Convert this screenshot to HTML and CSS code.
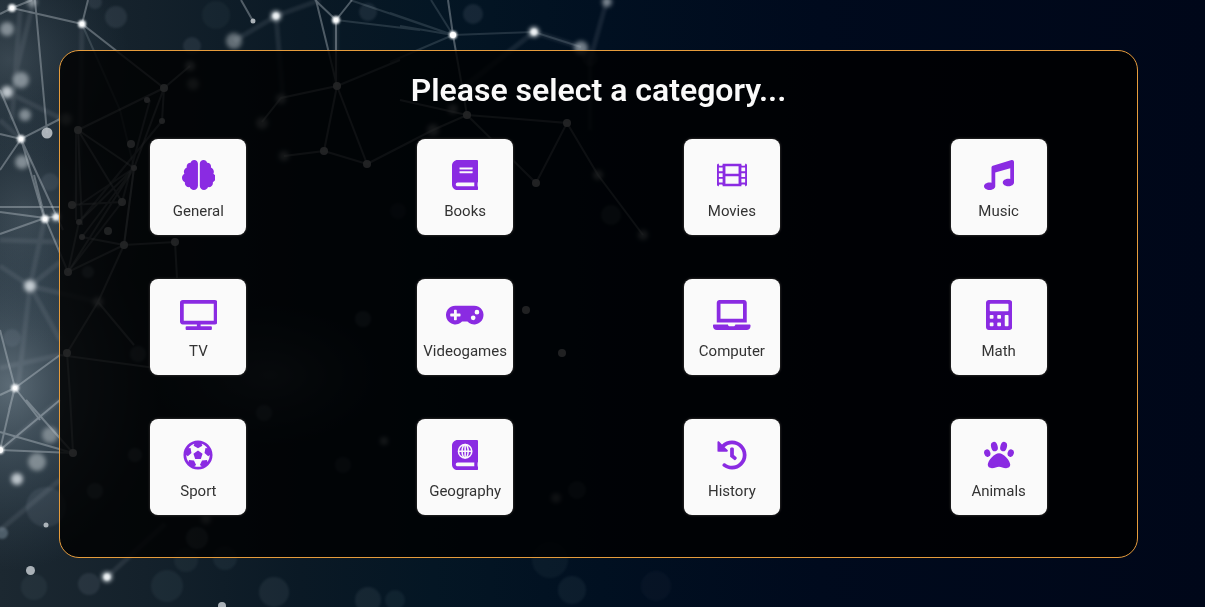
FILE: index.html
```html
<!DOCTYPE html>
<html lang="en">
<head>
<meta charset="utf-8">
<title>Select a category</title>
<link rel="stylesheet" href="styles.css">
</head>
<body>
<svg class="backdrop" viewBox="0 0 1205 607" preserveAspectRatio="xMinYMin slice" aria-hidden="true">
  <defs>
    <linearGradient id="night" x1="0" y1="0" x2="1" y2="0">
      <stop offset="0" stop-color="#1c2831"/>
      <stop offset=".12" stop-color="#14212b"/>
      <stop offset=".25" stop-color="#0a1925"/>
      <stop offset=".36" stop-color="#041624"/>
      <stop offset=".5" stop-color="#011021"/>
      <stop offset=".68" stop-color="#000a1d"/>
      <stop offset="1" stop-color="#000719"/>
    </linearGradient>
    <radialGradient id="haze">
      <stop offset="0" stop-color="#8798a4" stop-opacity=".6"/>
      <stop offset=".5" stop-color="#617482" stop-opacity=".32"/>
      <stop offset="1" stop-color="#4a5e6c" stop-opacity="0"/>
    </radialGradient>
    <filter id="soft0" x="-10%" y="-10%" width="120%" height="120%"><feGaussianBlur stdDeviation=".5"/></filter>
    <filter id="soft1" x="-50%" y="-50%" width="200%" height="200%"><feGaussianBlur stdDeviation="1"/></filter>
    <filter id="soft2" x="-50%" y="-50%" width="200%" height="200%"><feGaussianBlur stdDeviation="2"/></filter>
  </defs>
  <rect width="1205" height="607" fill="url(#night)"/>
  <ellipse cx="10" cy="385" rx="150" ry="185" fill="url(#haze)"/>
  <ellipse cx="25" cy="215" rx="120" ry="130" fill="url(#haze)" opacity=".5"/>
  <ellipse cx="10" cy="60" rx="120" ry="110" fill="url(#haze)" opacity=".45"/>
  <ellipse cx="270" cy="375" rx="120" ry="70" fill="url(#haze)" opacity=".4"/>

  <g fill="#8fa3b1" fill-opacity=".13" filter="url(#soft1)">
    <circle cx="116" cy="17" r="11"/><circle cx="216" cy="15" r="14" fill-opacity=".06"/>
    <circle cx="192" cy="46" r="9"/><circle cx="368" cy="12" r="9"/><circle cx="473" cy="14" r="10"/>
    <circle cx="95" cy="2" r="7"/><circle cx="50" cy="182" r="9"/><circle cx="12" cy="338" r="9"/>
    <circle cx="46" cy="507" r="20"/><circle cx="2" cy="533" r="6" fill-opacity=".4"/>
    <circle cx="34" cy="587" r="13" fill-opacity=".08"/><circle cx="89" cy="584" r="11"/>
    <circle cx="167" cy="586" r="16" fill-opacity=".08"/><circle cx="225" cy="558" r="12" fill-opacity=".08"/>
    <circle cx="274" cy="592" r="15" fill-opacity=".1"/><circle cx="368" cy="600" r="13" fill-opacity=".1"/><circle cx="395" cy="600" r="10" fill-opacity=".08"/>
    <circle cx="186" cy="560" r="12" fill-opacity=".07"/><circle cx="550" cy="560" r="18" fill-opacity=".06"/>
    <circle cx="572" cy="590" r="14" fill-opacity=".08"/><circle cx="656" cy="586" r="15" fill-opacity=".04"/>
    <circle cx="197" cy="538" r="11" fill-opacity=".3"/><circle cx="135" cy="455" r="7" fill-opacity=".3"/>
    <circle cx="95" cy="491" r="8" fill-opacity=".3"/><circle cx="363" cy="319" r="8" fill-opacity=".3"/>
    <circle cx="264" cy="413" r="8" fill-opacity=".25"/><circle cx="343" cy="465" r="8" fill-opacity=".2"/>
    <circle cx="590" cy="58" r="8"/><circle cx="611" cy="215" r="10" fill-opacity=".25"/>
    <circle cx="398" cy="211" r="8"/><circle cx="577" cy="490" r="9" fill-opacity=".2"/>
    <circle cx="138" cy="354" r="8" fill-opacity=".3"/><circle cx="88" cy="272" r="6" fill-opacity=".4"/>
  </g>

  <g fill="none" stroke="#b6c3cc" stroke-opacity=".1" stroke-width="5" filter="url(#soft1)">
    <path d="M20 10L12 120M7 92L60 118M30 286L0 266M30 286L18 388M30 286L60 340M30 286L60 262M0 450L60 400M98 302L30 286M45 218L30 286M0 240L60 242M0 368L60 355M82 24L80 130L76 205M336 20V86M234 41L276 16L320 0M107 577L165 524M534 32L581 47M607 0L590 60V130M534 32L460 90M276 16L283 98M22 140L0 120M34 0L14 80M60 480L0 530"/>
  </g>
  <g fill="none" stroke="#d2dce3" stroke-opacity=".34" stroke-width="2" filter="url(#soft0)">
    <path d="M0 14L12 8L32 0M12 8L82 24L164 88M35 0L47 133M82 24L88 0M241 0L253 21M315 0L336 20L352 0M316 0L337 86M336 20V86M448 0L453 35L467 115M21 139L0 90M21 139L0 170M21 139L44 218M21 139L63 230M0 134L21 139L60 119"/>
    <path d="M82 24L120 110L134 168M336 20L420 30M350 0L453 35L390 13M453 35L400 26M453 35L390 62M431 0L453 35L534 32L581 47" stroke-opacity=".15"/>
    <path d="M0 212L45 218L0 234M45 218L34 175M45 218L68 272M45 218L60 216M0 207H60M15 388L0 330M15 388L0 395M15 388L60 355L170 370M15 388L9 410M15 388L40 420M0 450L14 390M0 450L73 453M0 450L60 400M73 453L26 400M0 432L73 453"/>
    <path d="M73 453L70 395L67 353L98 302L124 245M164 88L78 130L134 168L164 88L190 66M164 88L162 121M78 130L82 225M78 130L122 202M134 168L79 222L68 272L134 168M134 168L82 237L124 245M134 168L124 245L175 242L177 278M124 245L68 272M122 202L70 205M124 245L98 302L134 345M337 86L281 98L262 122M337 86L324 151L284 156M337 86L367 164L324 151M367 164L433 130L467 115L567 123L536 183L467 115M567 123L598 175L643 235M467 115L400 100"/>
    <path d="M79 222L162 121M79 205L134 168M122 202L150 100M124 245L134 168M76 130L76 220M68 272L122 202M337 86L400 60" stroke-opacity=".3"/>
  </g>

  <g fill="#cbd3d8" fill-opacity=".55" filter="url(#soft2)">
    <circle cx="7" cy="29" r="7"/><circle cx="32" cy="2" r="5"/><circle cx="21" cy="80" r="8"/>
    <circle cx="25" cy="115" r="6"/><circle cx="22" cy="162" r="7"/><circle cx="7" cy="92" r="6" fill-opacity=".9"/>
    <circle cx="234" cy="41" r="8" fill-opacity=".45"/><circle cx="50" cy="435" r="8" fill-opacity=".45"/>
    <circle cx="37" cy="462" r="9" fill-opacity=".5"/><circle cx="17" cy="479" r="6" fill-opacity=".9"/>
    <circle cx="30" cy="286" r="6" fill-opacity=".95"/><circle cx="276" cy="16" r="5" fill-opacity="1"/>
    <circle cx="534" cy="32" r="5" fill-opacity="1"/><circle cx="581" cy="48" r="7"/>
    <circle cx="607" cy="2" r="5"/><circle cx="107" cy="577" r="5" fill-opacity="1"/>
    <circle cx="190" cy="66" r="5"/><circle cx="193" cy="84" r="6" fill-opacity=".4"/><circle cx="281" cy="99" r="5"/>
    <circle cx="262" cy="123" r="6" fill-opacity=".5"/><circle cx="284" cy="156" r="5"/><circle cx="98" cy="302" r="5"/>
    <circle cx="433" cy="130" r="6"/><circle cx="453" cy="109" r="5"/><circle cx="598" cy="175" r="5"/>
    <circle cx="643" cy="235" r="5"/><circle cx="384" cy="441" r="4"/><circle cx="556" cy="498" r="5" fill-opacity=".4"/>
    <circle cx="66" cy="119" r="6" fill-opacity=".4"/><circle cx="56" cy="217" r="4" fill-opacity="1"/>
    <circle cx="206" cy="519" r="5" fill-opacity=".4"/>
  </g>
  <g fill="#eef2f4" filter="url(#soft1)">
    <circle cx="12" cy="8" r="4"/><circle cx="82" cy="24" r="4"/><circle cx="21" cy="139" r="4"/>
    <circle cx="336" cy="20" r="4"/><circle cx="453" cy="35" r="4"/><circle cx="45" cy="219" r="4"/>
    <circle cx="56" cy="217" r="3"/><circle cx="15" cy="388" r="4"/><circle cx="0" cy="450" r="4"/>
    <circle cx="276" cy="16" r="3"/><circle cx="534" cy="32" r="3"/><circle cx="107" cy="577" r="3"/>
  </g>
  <g fill="#fff">
    <circle cx="12" cy="8" r="2"/><circle cx="82" cy="24" r="2"/><circle cx="21" cy="139" r="2"/>
    <circle cx="336" cy="20" r="2"/><circle cx="453" cy="35" r="3"/><circle cx="45" cy="219" r="2"/>
    <circle cx="15" cy="388" r="2"/><circle cx="0" cy="450" r="3"/>
  </g>
  <g fill="#bac1c6" fill-opacity=".9">
    <circle cx="47" cy="133" r="5.5"/><circle cx="253" cy="21" r="2.5"/><circle cx="46" cy="525" r="2.5"/>
    <circle cx="30.500" cy="570.500" r="4.500"/><circle cx="222" cy="606" r="4"/>
  </g>
  <g fill="#c3cacf" fill-opacity=".9" filter="url(#soft0)">
    <circle cx="164" cy="88" r="4"/><circle cx="147" cy="100" r="3"/><circle cx="162" cy="121" r="3"/>
    <circle cx="78" cy="130" r="4"/><circle cx="131" cy="144" r="4"/><circle cx="134" cy="168" r="3"/>
    <circle cx="122" cy="202" r="4"/><circle cx="72" cy="205" r="4"/><circle cx="79" cy="222" r="3"/>
    <circle cx="82" cy="237" r="3"/><circle cx="108" cy="231" r="4"/><circle cx="124" cy="245" r="4"/>
    <circle cx="175" cy="242" r="4"/><circle cx="68" cy="272" r="4"/><circle cx="337" cy="86" r="4"/>
    <circle cx="324" cy="151" r="4"/><circle cx="367" cy="164" r="4"/><circle cx="467" cy="115" r="4"/>
    <circle cx="567" cy="123" r="4"/><circle cx="536" cy="183" r="4"/><circle cx="67" cy="353" r="4"/>
    <circle cx="73" cy="453" r="4"/><circle cx="562" cy="353" r="4"/><circle cx="526" cy="310" r="4"/>
  </g>
</svg>

<main class="panel">
  <h1 class="title">Please select a category...</h1>
  <div class="categories">
    <button class="card" type="button">
      <svg class="icon" viewBox="0 0 576 512" aria-hidden="true"><path d="M208 0c-29.900 0-54.700 20.500-61.800 48.200-.8 0-1.400-.2-2.200-.2-35.300 0-64 28.700-64 64 0 4.800.6 9.500 1.700 14C52.500 138 32 166.600 32 200c0 12.600 3.200 24.300 8.300 34.900C16.300 248.700 0 274.300 0 304c0 33.300 20.400 61.900 49.400 73.900-.9 4.600-1.400 9.300-1.400 14.100 0 39.800 32.200 72 72 72 4.100 0 8.100-.5 12-1.200 9.600 28.500 36.200 49.200 68 49.200 39.800 0 72-32.200 72-72V64c0-35.300-28.700-64-64-64zm368 304c0-29.700-16.300-55.300-40.300-69.100 5.200-10.600 8.300-22.300 8.300-34.900 0-33.400-20.500-62-49.700-74 1-4.500 1.700-9.200 1.700-14 0-35.300-28.700-64-64-64-.8 0-1.500.2-2.200.2C422.700 20.500 397.900 0 368 0c-35.300 0-64 28.600-64 64v376c0 39.800 32.200 72 72 72 31.800 0 58.400-20.700 68-49.200 3.900.7 7.900 1.200 12 1.200 39.800 0 72-32.200 72-72 0-4.800-.5-9.500-1.400-14.100 29-12 49.400-40.600 49.400-73.900z"/></svg>
      <span class="label">General</span>
    </button>
    <button class="card" type="button">
      <svg class="icon" viewBox="0 0 448 512" aria-hidden="true"><path d="M448 360V24c0-13.300-10.700-24-24-24H96C43 0 0 43 0 96v320c0 53 43 96 96 96h328c13.300 0 24-10.700 24-24v-16c0-7.500-3.500-14.300-8.900-18.700-4.200-15.400-4.200-59.300 0-74.700 5.400-4.300 8.900-11.100 8.900-18.600zM128 134c0-3.300 2.700-6 6-6h212c3.300 0 6 2.700 6 6v20c0 3.300-2.700 6-6 6H134c-3.300 0-6-2.700-6-6v-20zm0 64c0-3.300 2.700-6 6-6h212c3.300 0 6 2.700 6 6v20c0 3.300-2.700 6-6 6H134c-3.300 0-6-2.700-6-6v-20zm253.400 250H96c-17.700 0-32-14.300-32-32 0-17.600 14.400-32 32-32h285.400c-1.900 17.100-1.900 46.900 0 64z"/></svg>
      <span class="label">Books</span>
    </button>
    <button class="card" type="button">
      <svg class="icon" viewBox="0 0 512 512" aria-hidden="true"><path fill-rule="evenodd" d="M488 64h-8v20c0 6.600-5.400 12-12 12h-40c-6.600 0-12-5.400-12-12V64H96v20c0 6.600-5.400 12-12 12H44c-6.600 0-12-5.400-12-12V64h-8C10.700 64 0 74.700 0 88v336c0 13.300 10.700 24 24 24h8v-20c0-6.600 5.400-12 12-12h40c6.600 0 12 5.400 12 12v20h320v-20c0-6.600 5.400-12 12-12h40c6.600 0 12 5.400 12 12v20h8c13.300 0 24-10.700 24-24V88c0-13.300-10.700-24-24-24zM32 128h64v64H32zM32 224h64v64H32zM32 320h64v64H32zM416 128h64v64h-64zM416 224h64v64h-64zM416 320h64v64h-64zM144 108h224v128H144zM144 276h224v128H144z"/></svg>
      <span class="label">Movies</span>
    </button>
    <button class="card" type="button">
      <svg class="icon" viewBox="0 0 512 512" aria-hidden="true"><path d="M511.990 32.010c0-21.710-21.100-37.010-41.600-30.510L150.400 96c-13.300 4.200-22.400 16.500-22.400 30.500v261.420c-10.050-2.380-20.720-3.920-32-3.920-53.020 0-96 28.650-96 64s42.980 64 96 64 96-28.650 96-64V214.310l256-75.020v184.630c-10.050-2.380-20.720-3.920-32-3.920-53.020 0-96 28.650-96 64s42.980 64 96 64 96-28.650 96-64z"/></svg>
      <span class="label">Music</span>
    </button>
    <button class="card" type="button">
      <svg class="icon" viewBox="0 0 640 512" aria-hidden="true"><path d="M592 0H48A48 48 0 0 0 0 48v320a48 48 0 0 0 48 48h240v32H112a16 16 0 0 0-16 16v32a16 16 0 0 0 16 16h416a16 16 0 0 0 16-16v-32a16 16 0 0 0-16-16H352v-32h240a48 48 0 0 0 48-48V48a48 48 0 0 0-48-48zm-16 352H64V64h512z"/></svg>
      <span class="label">TV</span>
    </button>
    <button class="card" type="button">
      <svg class="icon" viewBox="0 0 640 512" aria-hidden="true"><path d="M480.070 96H160a160 160 0 1 0 114.240 272h91.520A160 160 0 1 0 480.070 96zM248 268a12 12 0 0 1-12 12h-52v52a12 12 0 0 1-12 12h-24a12 12 0 0 1-12-12v-52H84a12 12 0 0 1-12-12v-24a12 12 0 0 1 12-12h52v-52a12 12 0 0 1 12-12h24a12 12 0 0 1 12 12v52h52a12 12 0 0 1 12 12zm216 76a40 40 0 1 1 40-40 40 40 0 0 1-40 40zm64-96a40 40 0 1 1 40-40 40 40 0 0 1-40 40z"/></svg>
      <span class="label">Videogames</span>
    </button>
    <button class="card" type="button">
      <svg class="icon" viewBox="0 0 640 512" aria-hidden="true"><path d="M624 416H381.540c-.74 19.810-14.710 32-32.740 32H288c-18.690 0-33.020-17.470-32.770-32H16c-8.800 0-16 7.200-16 16v16c0 35.200 28.800 64 64 64h512c35.200 0 64-28.800 64-64v-16c0-8.800-7.200-16-16-16zM576 48c0-26.400-21.600-48-48-48H112C85.600 0 64 21.600 64 48v336h512V48zm-64 272H128V64h384v256z"/></svg>
      <span class="label">Computer</span>
    </button>
    <button class="card" type="button">
      <svg class="icon" viewBox="0 0 448 512" aria-hidden="true"><path fill-rule="evenodd" d="M400 0H48C22.400 0 0 22.400 0 48v416c0 25.600 22.400 48 48 48h352c25.600 0 48-22.400 48-48V48c0-25.600-22.400-48-48-48zM77 64h294q13 0 13 13v102q0 13-13 13H77q-13 0-13-13V77q0-13 13-13zM77 256h38q13 0 13 13v38q0 13-13 13H77q-13 0-13-13v-38q0-13 13-13zM77 384h38q13 0 13 13v38q0 13-13 13H77q-13 0-13-13v-38q0-13 13-13zM205 256h38q13 0 13 13v38q0 13-13 13h-38q-13 0-13-13v-38q0-13 13-13zM205 384h38q13 0 13 13v38q0 13-13 13h-38q-13 0-13-13v-38q0-13 13-13zM333 256h38q13 0 13 13v166q0 13-13 13h-38q-13 0-13-13V269q0-13 13-13z"/></svg>
      <span class="label">Math</span>
    </button>
    <button class="card" type="button">
      <svg class="icon" viewBox="0 0 512 512" aria-hidden="true"><path d="M504 256c0 136.967-111.033 248-248 248S8 392.967 8 256 119.033 8 256 8s248 111.033 248 248zm-48 0l-.003-.282-26.064 22.741-62.679-58.500 16.454-84.355 34.303 3.072c-24.889-34.216-60.004-60.089-100.709-73.141l13.651 31.939L256 139l-74.953-41.525 13.651-31.939c-40.631 13.028-75.780 38.870-100.709 73.141l34.565-3.073 16.192 84.355-62.678 58.500-26.064-22.741-.003.282c0 43.015 13.497 83.952 38.472 117.991l7.704-33.897 85.138 10.447 36.301 77.826-29.902 17.786c40.202 13.122 84.290 13.148 124.572 0l-29.902-17.786 36.301-77.826 85.138-10.447 7.704 33.897C442.503 339.952 456 299.015 456 256zm-248.102 69.571l-29.894-91.312L256 177.732l77.996 56.527-29.622 91.312h-96.476z"/></svg>
      <span class="label">Sport</span>
    </button>
    <button class="card" type="button">
      <svg class="icon" viewBox="0 0 448 512" aria-hidden="true"><path d="M448 360V24c0-13.300-10.700-24-24-24H96C43 0 0 43 0 96v320c0 53 43 96 96 96h328c13.300 0 24-10.700 24-24v-16c0-7.500-3.500-14.300-8.900-18.700-4.200-15.400-4.200-59.300 0-74.700 5.400-4.300 8.900-11.100 8.900-18.600zM381.400 448H96c-17.700 0-32-14.300-32-32 0-17.600 14.400-32 32-32h285.400c-1.900 17.100-1.900 46.900 0 64z"/><g class="globe"><circle cx="224" cy="192" r="114"/><ellipse cx="224" cy="192" rx="52" ry="114"/><path d="M110 192h228M224 78v228"/></g></svg>
      <span class="label">Geography</span>
    </button>
    <button class="card" type="button">
      <svg class="icon" viewBox="0 0 512 512" aria-hidden="true"><path d="M504 255.531c.253 136.640-111.180 248.372-247.820 248.468-59.015.042-113.223-20.530-155.822-54.911-11.077-8.940-11.905-25.541-1.839-35.607l11.267-11.267c8.609-8.609 22.353-9.551 31.891-1.984C173.062 425.135 212.781 440 256 440c101.705 0 184-82.311 184-184 0-101.705-82.311-184-184-184-48.814 0-93.149 18.969-126.068 49.932l50.754 50.754c10.080 10.080 2.941 27.314-11.313 27.314H24c-8.837 0-16-7.163-16-16V38.627c0-14.254 17.234-21.393 27.314-11.314l49.372 49.372C129.209 34.136 189.552 8 256 8c136.810 0 247.747 110.780 248 247.531zm-180.912 78.784l9.823-12.630c8.138-10.463 6.253-25.542-4.210-33.679L288 256.349V152c0-13.255-10.745-24-24-24h-16c-13.255 0-24 10.745-24 24v135.651l65.409 50.874c10.463 8.137 25.541 6.253 33.679-4.210z"/></svg>
      <span class="label">History</span>
    </button>
    <button class="card" type="button">
      <svg class="icon" viewBox="0 0 512 512" aria-hidden="true"><path d="M256 224c-79.410 0-192 122.760-192 200.250 0 34.900 26.810 55.750 71.740 55.750 48.840 0 81.090-25.080 120.260-25.080 39.510 0 71.850 25.080 120.260 25.080 44.930 0 71.740-20.850 71.740-55.750C448 346.760 335.410 224 256 224z"/><ellipse cx="56" cy="224" rx="53" ry="65" transform="rotate(-17 56 224)"/><ellipse cx="456" cy="224" rx="53" ry="65" transform="rotate(17 456 224)"/><ellipse cx="177" cy="112" rx="56" ry="82" transform="rotate(-15 177 112)"/><ellipse cx="335" cy="112" rx="56" ry="82" transform="rotate(15 335 112)"/></svg>
      <span class="label">Animals</span>
    </button>
  </div>
</main>
</body>
</html>
```
FILE: styles.css
```css
* {
  box-sizing: border-box;
}

body {
  margin: 0;
  padding: 50px 67px 49px 59px;
  background: #000719;
  color: #fafafa;
  font-family: Roboto, "Liberation Sans", sans-serif;
}

.backdrop {
  position: fixed;
  inset: 0;
  z-index: -1;
  width: 100%;
  height: 100%;
}

.panel {
  padding: 19px 5px 42px;
  border: 1px solid #e69c3c;
  border-radius: 20px;
  background: rgba(0, 0, 0, 0.82);
}

.title {
  margin: 0 0 29px;
  font-size: 32px;
  font-weight: 600;
  line-height: 40px;
  text-align: center;
}

.categories {
  display: grid;
  grid-template-columns: repeat(4, 1fr);
  row-gap: 44px;
  justify-items: center;
}

.card {
  display: flex;
  flex-direction: column;
  align-items: center;
  gap: 12px;
  width: 96px;
  height: 96px;
  padding: 21px 0 0;
  border: 0;
  border-radius: 8px;
  background: #fafafa;
  box-shadow: 0 0 2px 1px #222;
  color: #333;
  font: inherit;
  cursor: pointer;
}

.icon {
  height: 30px;
  fill: #8a2be2;
}

.globe {
  fill: none;
  stroke: #fafafa;
  stroke-width: 26;
}

.label {
  font-size: 15px;
  line-height: 18px;
}
```
